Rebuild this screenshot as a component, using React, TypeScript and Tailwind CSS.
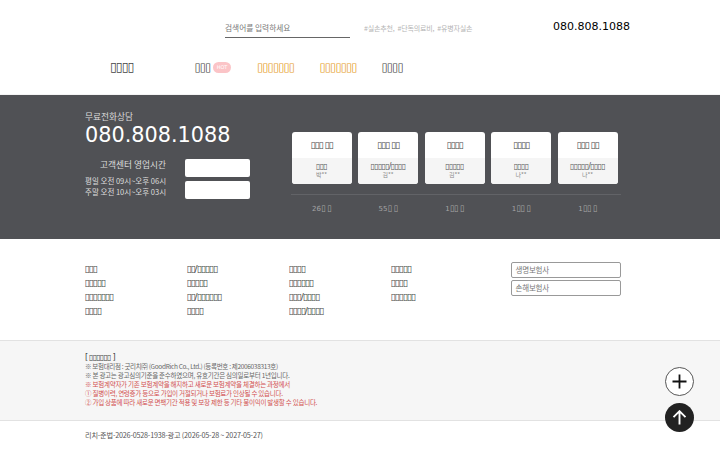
import clsx from 'clsx';

interface Review {
  title: string;
  product: string;
  name: string;
  count: string;
  unit: string;
}

const reviews: Review[] = [
  { title: '▯▯▯ ▯▯', product: '▯▯▯', name: '박**', count: '26', unit: '▯ ▯' },
  { title: '▯▯▯ ▯▯', product: '▯▯▯▯▯/▯▯▯▯', name: '김**', count: '55', unit: '▯ ▯' },
  { title: '▯▯▯▯', product: '▯▯▯▯▯', name: '김**', count: '1', unit: '▯▯ ▯' },
  { title: '▯▯▯▯', product: '▯▯▯▯', name: '나**', count: '1', unit: '▯▯ ▯' },
  { title: '▯▯▯ ▯▯', product: '▯▯▯▯▯/▯▯▯▯', name: '나**', count: '1', unit: '▯▯ ▯' },
];

const linkColumns = [
  ['▯▯▯', '▯▯▯▯▯', '▯▯▯▯▯▯▯', '▯▯▯▯'],
  ['▯▯/▯▯▯▯▯', '▯▯▯▯▯', '▯▯/▯▯▯▯▯▯', '▯▯▯▯'],
  ['▯▯▯▯', '▯▯▯▯▯▯', '▯▯▯/▯▯▯▯', '▯▯▯▯/▯▯▯▯'],
  ['▯▯▯▯▯', '▯▯▯▯', '▯▯▯▯▯▯'],
];

const dejavu = "font-['DejaVu_Sans',sans-serif]";

function Header() {
  return (
    <header className="h-[95px] border-b border-[#f4f4f4] bg-white">
      <div className="flex h-[38px] pl-[225px]">
        <div className="flex w-[125px] items-end border-b border-[#666] pb-[3px] text-[7.7px] leading-[13px] text-[#777]">
          검색어를 입력하세요
        </div>
        <div className="ml-[14px] w-[189px] pt-[22px] text-[7px] leading-[12px] tracking-[-0.16px] text-[#b5b5b5]">
          #실손추천,&nbsp; #단독의료비,&nbsp; #유병자실손
        </div>
        <div className={clsx(dejavu, 'pt-[20px] text-[11px] leading-[14px] text-black')}>080.808.1088</div>
      </div>
      <nav className={clsx(dejavu, 'mt-[22px] flex h-[14px] items-center text-[11.5px] leading-[14px] tracking-[-1.03px] whitespace-nowrap text-[#444]')}>
        <span className="ml-[110px] w-[84.5px] text-[12.5px]">▯▯▯▯</span>
        <span className="w-[18.5px]">▯▯▯</span>
        <span className="flex h-[11px] w-[18px] items-center justify-center rounded-full bg-[#fbc4c7] text-[5px] tracking-normal text-white">HOT</span>
        <span className="ml-[26px] w-[62.5px] text-[#e59a1c]">▯▯▯▯▯▯▯</span>
        <span className="w-[62px] text-[#e59a1c]">▯▯▯▯▯▯▯</span>
        <span>▯▯▯▯</span>
      </nav>
    </header>
  );
}

function ReviewCard({ review }: { review: Review }) {
  return (
    <li className={clsx(dejavu, 'w-[60px] text-center whitespace-nowrap')}>
      <div className="h-[52px] overflow-hidden rounded-[3px] bg-white">
        <div className="h-[26px] text-[9px] leading-[26px] tracking-[-0.9px] text-[#444]">{review.title}</div>
        <div className="h-[26px] bg-[#f5f5f5] pt-[4px]">
          <p className="text-[8px] leading-[10px] tracking-[-0.75px] text-[#555]">{review.product}</p>
          <p className="font-['Noto_Sans_CJK_KR',sans-serif] text-[6px] leading-[6px] text-[#888]">{review.name}</p>
        </div>
      </div>
      <div className="mt-[18px] text-[7px] leading-[13px] text-[#a5a5a5]">
        {review.count}
        <span className="text-[8.5px] tracking-[-0.7px]">{review.unit}</span>
      </div>
    </li>
  );
}

function Consult() {
  return (
    <section className="flex h-[144px] bg-[#505155] pl-[85px] text-white">
      <div className="w-[206px] pt-[16px]">
        <p className="text-[8.7px] leading-[12px] text-[#ddd]">무료전화상담</p>
        <p className={clsx(dejavu, 'text-[20.8px] leading-[24px]')}>080.808.1088</p>
        <div className="mt-[10px] flex">
          <div className="w-[81px] text-right whitespace-nowrap text-[#ddd]">
            <p className="text-[8.7px] leading-[16px]">고객센터 영업시간</p>
            <p className="mt-[2px] text-[7.5px] leading-[11px]">평일 오전 09시~오후 06시</p>
            <p className="text-[7.5px] leading-[11px]">주말 오전 10시~오후 03시</p>
          </div>
          <div className="ml-[19px] flex flex-col gap-[4px] pt-[2px]">
            <button className="h-[18px] w-[65px] rounded-[2px] bg-white" />
            <button className="h-[18px] w-[65px] rounded-[2px] bg-white" />
          </div>
        </div>
      </div>
      <div className="relative w-[330px] pt-[37px]">
        <ul className="flex gap-[6.5px] pl-[0.5px]">
          {reviews.map((r, i) => (
            <ReviewCard key={i} review={r} />
          ))}
        </ul>
        <div className="absolute top-[99px] left-0 h-px w-full bg-[#626367]" />
      </div>
    </section>
  );
}

function SiteLinks() {
  return (
    <section className="flex h-[101px] bg-white pt-[23px] pl-[84.5px]">
      {linkColumns.map((col, i) => (
        <ul key={i} className={clsx(dejavu, 'w-[102px] text-[9.2px] leading-[14px] tracking-[-1px] text-[#444]')}>
          {col.map((label, j) => (
            <li key={j}>{label}</li>
          ))}
        </ul>
      ))}
      <div className="ml-[18.5px] flex flex-col gap-[2px]">
        <div className="h-[16px] w-[110px] rounded-[2px] border border-[#999] pl-[3.5px] text-[7.5px] leading-[14px] tracking-[-0.2px] text-[#777]">생명보험사</div>
        <div className="h-[16px] w-[110px] rounded-[2px] border border-[#999] pl-[3.5px] text-[7.5px] leading-[14px] tracking-[-0.2px] text-[#777]">손해보험사</div>
      </div>
    </section>
  );
}

function Notice() {
  return (
    <section className="h-[81px] border-y border-[#e2e2e2] bg-[#f6f6f6] pt-[12px] pl-[85px] text-[6.5px] leading-[9px] tracking-[-0.25px] whitespace-nowrap text-[#666]">
      <p className={clsx(dejavu, 'text-[8px] tracking-[-0.8px] text-[#444]')}>[ ▯▯▯▯▯▯ ]</p>
      <p className="tracking-[-0.32px]">※ 보험대리점 : 굿리치㈜ (GoodRich Co., Ltd.) (등록번호 : 제2006038313호)</p>
      <p>※ 본 광고는 광고심의기준을 준수하였으며, 유효기간은 심의일로부터 1년입니다.</p>
      <div className="text-[#d2504f]">
        <p>※ 보험계약자가 기존 보험계약을 해지하고 새로운 보험계약을 체결하는 과정에서</p>
        <p>① 질병이력, 연령증가 등으로 가입이 거절되거나 보험료가 인상될 수 있습니다.</p>
        <p>② 가입 상품에 따라 새로운 면책기간 적용 및 보장 제한 등 기타 불이익이 발생할 수 있습니다.</p>
      </div>
    </section>
  );
}

function FloatingButtons() {
  return (
    <div className="fixed top-[367px] left-[665px] flex flex-col gap-[7px]">
      <button className="flex h-[29px] w-[29px] items-center justify-center rounded-full border border-[#555] bg-white">
        <svg width="15" height="15" viewBox="0 0 15 15" stroke="#111" strokeWidth="1.8" fill="none">
          <path d="M7.5 .5v14M.5 7.5h14" />
        </svg>
      </button>
      <button className="flex h-[29px] w-[29px] items-center justify-center rounded-full bg-[#222]">
        <svg width="15" height="15" viewBox="0 0 15 15" stroke="#fff" strokeWidth="1.9" fill="none">
          <path d="M7.5 14.5V1.5M1.5 7.2l6-6 6 6" />
        </svg>
      </button>
    </div>
  );
}

export default function App() {
  return (
    <div className="h-[450px] w-[720px] overflow-hidden bg-white font-['Noto_Sans_CJK_KR',sans-serif]">
      <Header />
      <Consult />
      <SiteLinks />
      <Notice />
      <footer className="pt-[8px] pl-[85px] text-[7.2px] leading-[12px] tracking-[-0.2px] text-[#555]">
        리치-준법-2026-0528-1938-광고 (2026-05-28 ~ 2027-05-27)
      </footer>
      <FloatingButtons />
    </div>
  );
}
